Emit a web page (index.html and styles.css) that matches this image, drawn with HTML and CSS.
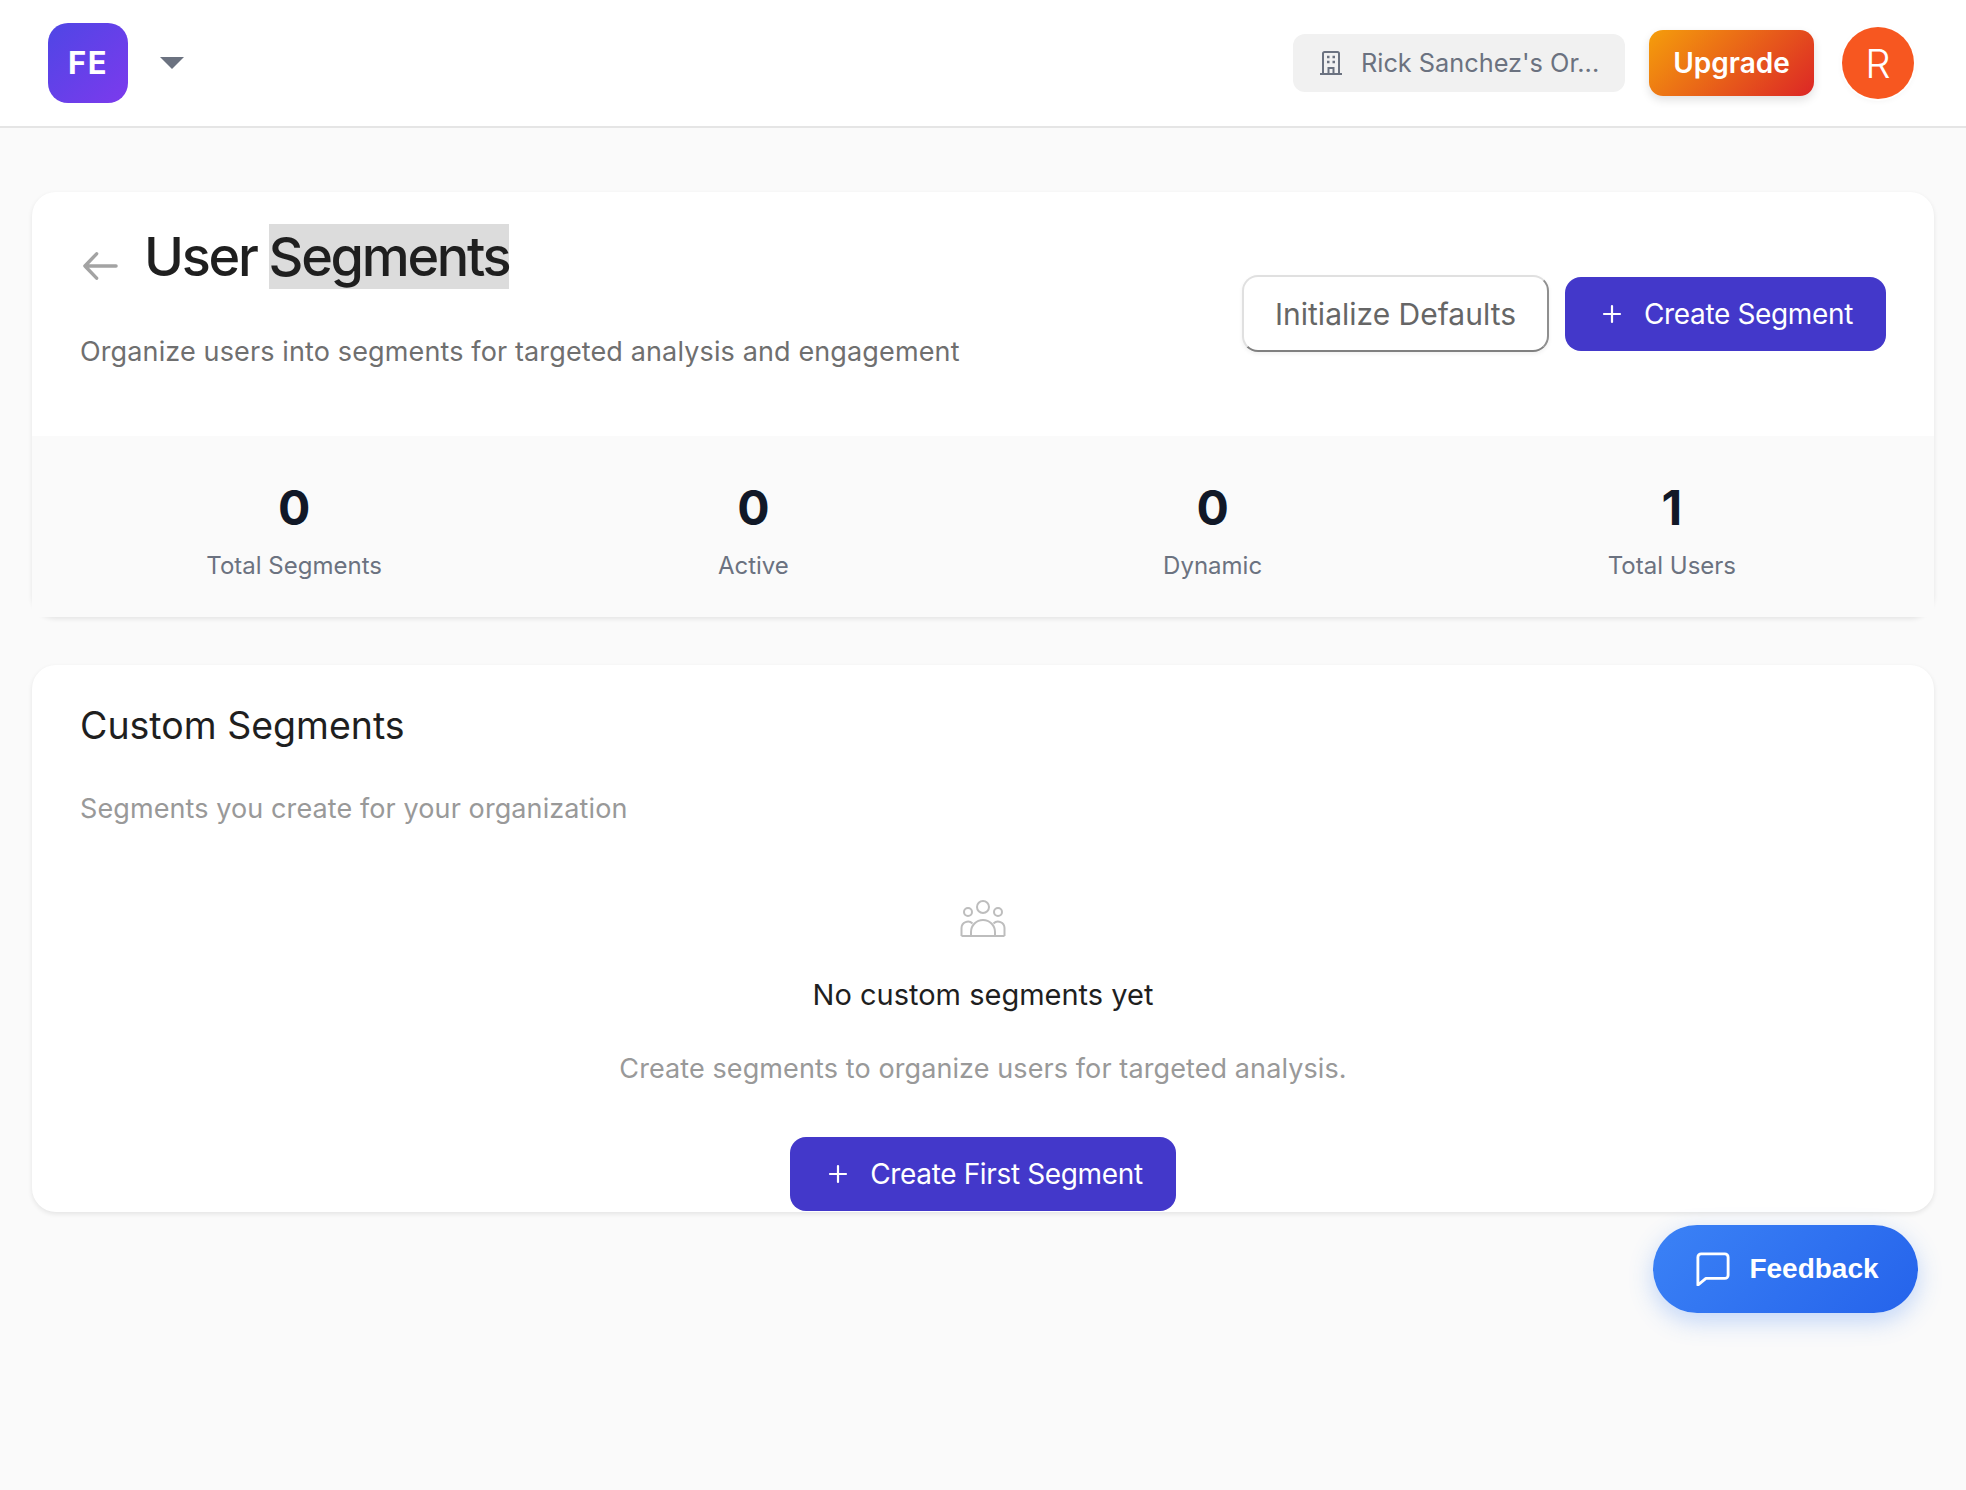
FILE: index.html
```html
<!DOCTYPE html>
<html lang="en">
<head>
<meta charset="utf-8">
<title>User Segments</title>
<link rel="stylesheet" href="styles.css">
</head>
<body>
<header class="topbar">
  <div class="brand">
    <div class="logo">FE</div>
    <svg class="caret" width="24" height="12" viewBox="0 0 24 12"><path d="M0 0h24L12 12z" fill="#6b7280"/></svg>
  </div>
  <div class="top-actions">
    <div class="org">
      <svg class="org-icon" width="24" height="24" viewBox="0 0 24 24" fill="none" stroke="#6b7280" stroke-width="2"><path d="M4 23V2.500A1.500 1.500 0 0 1 5.500 1h13A1.500 1.500 0 0 1 20 2.500V23M1 23h22M9.500 23v-6h5v6"/><path d="M8 6h2.500M13.500 6h2.500M8 11h2.500M13.500 11h2.500" stroke-width="2.400"/></svg>
      <span class="org-name">Rick Sanchez's Or...</span>
    </div>
    <button class="upgrade">Upgrade</button>
    <div class="avatar">R</div>
  </div>
</header>
<main class="page">
  <section class="card">
    <div class="head">
      <div class="head-text">
        <div class="title-row">
          <svg class="back" width="37" height="30" viewBox="0 0 38 30" fill="none" stroke="#a3a3a3" stroke-width="3.500" stroke-linecap="round" stroke-linejoin="round"><path d="M35 15H3M15 2.500 3 15l12 12.500"/></svg>
          <h1>User <span class="selected">Segments</span></h1>
        </div>
        <p class="subtitle">Organize users into segments for targeted analysis and engagement</p>
      </div>
      <div class="head-actions">
        <button class="btn-outline">Initialize Defaults</button>
        <button class="btn-primary head-create"><svg width="22" height="22" viewBox="0 0 22 22" stroke="#fff" stroke-width="2.200" stroke-linecap="round"><path d="M11 3v16M3 11h16"/></svg>Create Segment</button>
      </div>
    </div>
    <div class="stats">
      <div class="stat"><div class="num">0</div><div class="label">Total Segments</div></div>
      <div class="stat"><div class="num">0</div><div class="label">Active</div></div>
      <div class="stat"><div class="num">0</div><div class="label">Dynamic</div></div>
      <div class="stat"><div class="num">1</div><div class="label">Total Users</div></div>
    </div>
  </section>
  <section class="card custom">
    <h2>Custom Segments</h2>
    <p class="custom-sub">Segments you create for your organization</p>
    <div class="empty">
      <svg class="empty-icon" width="46" height="38" viewBox="0 0 46 38" fill="none" stroke="#bdbdbd" stroke-width="2"><circle cx="23" cy="7" r="6"/><circle cx="8" cy="12" r="4"/><circle cx="38" cy="12" r="4"/><path d="M1.500 36V28a6.500 6.500 0 0 1 11-4.500M44.500 36V28a6.500 6.500 0 0 0-11-4.500M1.500 36h43M11 36v-4a12 12 0 0 1 24 0v4"/></svg>
      <h3>No custom segments yet</h3>
      <p class="empty-desc">Create segments to organize users for targeted analysis.</p>
      <button class="btn-primary first-create"><svg width="22" height="22" viewBox="0 0 22 22" stroke="#fff" stroke-width="2.200" stroke-linecap="round"><path d="M11 3v16M3 11h16"/></svg>Create First Segment</button>
    </div>
  </section>
</main>
<button class="feedback">
  <svg width="34" height="34" viewBox="0 0 36 36" fill="none" stroke="#fff" stroke-width="3" stroke-linejoin="round"><path d="M2 5.500A3.500 3.500 0 0 1 5.500 2h25A3.500 3.500 0 0 1 34 5.500v19a3.500 3.500 0 0 1-3.500 3.500H10.500L2 35z"/></svg>
  Feedback
</button>
</body>
</html>
```
FILE: styles.css
```css
* { box-sizing: border-box; }
html, body { margin: 0; padding: 0; }
body {
  background: #fafafa;
  font-family: Inter, "Liberation Sans", sans-serif;
  height: 1490px;
  overflow: hidden;
  color: #1f1f1f;
}
button { font-family: inherit; border: 0; cursor: pointer; }
.topbar {
  height: 128px;
  background: #fff;
  border-bottom: 2px solid #e5e5e5;
  display: flex;
  align-items: center;
  justify-content: space-between;
  padding: 0 52px 0 48px;
}
.brand { display: flex; align-items: center; gap: 32px; }
.logo {
  width: 80px; height: 80px;
  border-radius: 20px;
  background: linear-gradient(135deg, #4f46e5, #7c3aed);
  color: #fff;
  font-weight: 700;
  font-size: 31px;
  letter-spacing: 1.500px;
  padding-bottom: 2px;
  display: flex; align-items: center; justify-content: center;
}
.caret { display: block; margin-top: 0; }
.top-actions { display: flex; align-items: center; }
.org {
  width: 332px; height: 58px;
  background: #f1f1f1;
  border-radius: 12px;
  display: flex; align-items: center;
  padding-left: 26px;
  gap: 18px;
  color: #6b7280;
  font-size: 25.300px;
  white-space: nowrap;
}
.org-icon { flex: none; }
.org-name { margin-bottom: 2px; }
.upgrade {
  margin-left: 24px;
  width: 165px; height: 66px;
  border-radius: 14px;
  background: linear-gradient(135deg, #f59e0b, #dc2626);
  color: #fff;
  font-size: 28px;
  font-weight: 600;
  box-shadow: 0 4px 10px rgba(0,0,0,.12);
}
.avatar {
  margin-left: 28px;
  width: 72px; height: 72px;
  border-radius: 50%;
  background: #f75720;
  color: #fff;
  font-size: 40px;
  font-weight: 350;
  box-shadow: 0 0 0 2px #fff, 0 2px 6px rgba(0,0,0,.05);
  display: flex; align-items: center; justify-content: center;
}
.page { padding: 64px 32px 0; display: flex; flex-direction: column; gap: 48px; }
.card {
  background: #fff;
  border-radius: 24px;
  box-shadow: 0 2px 5px rgba(0,0,0,.09);
}
.head {
  height: 244px;
  display: flex;
  justify-content: space-between;
  padding: 32px 48px 0;
}
.title-row { display: flex; align-items: center; gap: 25px; height: 66px; }
.back { display: block; margin-top: 17px; margin-left: 2px; }
h1 {
  margin: 0;
  font-size: 54px;
  font-weight: 550;
  letter-spacing: -2.300px;
  line-height: 66px;
  color: #1f1f1f;
  white-space: nowrap;
}
.selected { background: #dcdcdc; }
.subtitle {
  margin: 44px 0 0;
  font-size: 27px;
  letter-spacing: .130px;
  line-height: 36px;
  color: #6f6f6f;
}
.head-actions { display: flex; align-items: center; gap: 16px; margin-top: 51px; height: 77px; }
.btn-outline {
  width: 307px; height: 77px;
  background: #fff;
  border-radius: 16px;
  border: 2px solid #e0e0e0;
  border-right-color: #8f8f8f;
  border-bottom-color: #808080;
  color: #666;
  font-size: 30px;
  box-shadow: 0 2px 4px rgba(0,0,0,.06);
}
.btn-primary {
  background: #4338ca;
  color: #fff;
  border-radius: 16px;
  display: flex; align-items: center; justify-content: center;
  gap: 21px;
  padding-left: 9px;
  letter-spacing: -.360px;
}
.head-create { width: 321px; height: 74px; font-size: 28px; }
.stats {
  height: 181px;
  background: #fafafa;
  display: grid;
  grid-template-columns: repeat(4, 1fr);
  padding: 44px 32.500px 0;
}
.stat { text-align: center; }
.num { font-size: 48px; font-weight: 700; line-height: 56px; color: #111827; }
.label { font-size: 24px; line-height: 32px; margin-top: 14px; color: #6b7280; }
.custom { height: 547px; padding: 31px 48px 0; }
h2 { margin: 0; font-size: 37.500px; font-weight: 400; line-height: 60px; color: #1f1f1f; }
.custom-sub { margin: 35px 0 0; font-size: 27px; letter-spacing: .100px; line-height: 36px; color: #999; }
.empty { display: flex; flex-direction: column; align-items: center; }
.empty-icon { margin-top: 73px; display: block; }
h3 { margin: 0; font-size: 29px; font-weight: 400; line-height: 40px; margin-top: 37px; color: #1f1f1f; }
.empty-desc { margin: 36px 0 0; font-size: 27px; letter-spacing: .100px; line-height: 36px; color: #999; }
.first-create { width: 386px; height: 74px; font-size: 28px; margin-top: 50px; padding-left: 10px; }
.feedback {
  position: absolute;
  left: 1653px; top: 1225px;
  width: 265px; height: 88px;
  border-radius: 44px;
  background: linear-gradient(135deg, #3b82f6, #2563eb);
  color: #fff;
  font-family: "Liberation Sans", sans-serif;
  font-size: 28px;
  font-weight: 700;
  display: flex; align-items: center; justify-content: center;
  gap: 19px;
  padding: 0 0 0 4px;
  box-shadow: 0 8px 24px rgba(59,130,246,.3);
}
```
